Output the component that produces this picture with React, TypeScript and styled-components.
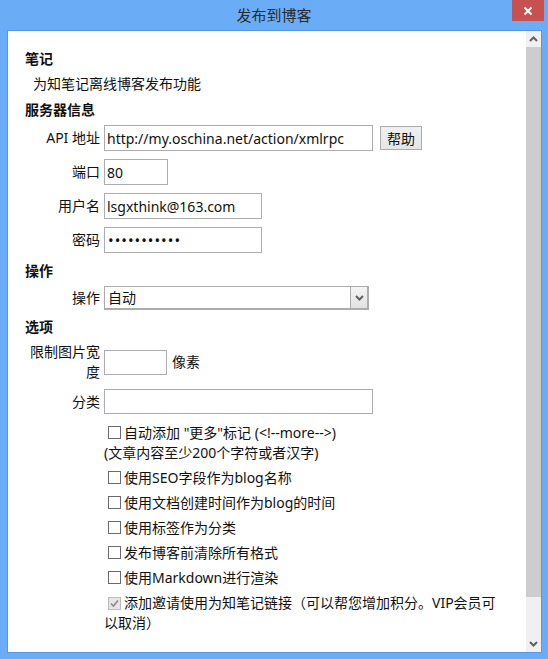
import styled, { createGlobalStyle } from "styled-components";

const GlobalStyle = createGlobalStyle`
  html, body {
    margin: 0;
    padding: 0;
    background: #6aacf5;
  }
  body {
    font-family: "Noto Sans", "Noto Sans CJK SC", sans-serif;
    font-size: 14px;
    color: #111;
  }
`;

const Chevron = ({ up }: { up?: boolean }) => (
  <svg width="9" height="6" viewBox="0 0 9 6">
    <path
      d={up ? "M1 5 L4.5 1.5 L8 5" : "M1 1 L4.5 4.5 L8 1"}
      fill="none"
      stroke="#606060"
      strokeWidth="2"
    />
  </svg>
);

const Check = () => (
  <svg width="11" height="11" viewBox="0 0 11 11">
    <path d="M2 5.5 L4.5 8 L9 2.5" fill="none" stroke="#8a8a8a" strokeWidth="1.6" />
  </svg>
);

const options = [
  ["使用SEO字段作为blog名称"],
  ["使用文档创建时间作为blog的时间"],
  ["使用标签作为分类"],
  ["发布博客前清除所有格式"],
  ["使用Markdown进行渲染"],
];

const App = () => {
  return (
    <Window>
      <GlobalStyle />
      <TitleBar>
        <Title>发布到博客</Title>
        <CloseButton>
          <svg width="10" height="10" viewBox="0 0 10 10">
            <path d="M1.5 1.5 L8.5 8.5 M8.5 1.5 L1.5 8.5" stroke="#fff" strokeWidth="2" />
          </svg>
        </CloseButton>
      </TitleBar>
      <Body>
        <Content>
          <Heading>笔记</Heading>
          <Desc>为知笔记离线博客发布功能</Desc>
          <Heading $mt={5}>服务器信息</Heading>
          <FormGrid $gap={8}>
            <Label>API 地址</Label>
            <Field>
              <TextInput $w={269} $h={26} defaultValue="http://my.oschina.net/action/xmlrpc" />
              <HelpButton>帮助</HelpButton>
            </Field>
            <Label>端口</Label>
            <Field>
              <TextInput $w={64} $h={26} defaultValue="80" />
            </Field>
            <Label>用户名</Label>
            <Field>
              <TextInput $w={158} $h={26} defaultValue="lsgxthink@163.com" />
            </Field>
            <Label>密码</Label>
            <Field>
              <PasswordInput $w={158} $h={26} type="password" defaultValue="12345678901" />
            </Field>
          </FormGrid>

          <Heading $mt={7}>操作</Heading>
          <FormGrid $gap={8}>
            <Label>操作</Label>
            <Field>
              <SelectBox>
                <SelectValue>自动</SelectValue>
                <SelectArrow>
                  <Chevron />
                </SelectArrow>
              </SelectBox>
            </Field>
          </FormGrid>

          <Heading $mt={6}>选项</Heading>
          <FormGrid $gap={7}>
            <Label>限制图片宽度</Label>
            <Field $gap={5}>
              <TextInput $w={63} $h={25} />
              <span>像素</span>
            </Field>
            <Label>分类</Label>
            <Field>
              <TextInput $w={269} $h={25} />
            </Field>
            <CheckList>
              <CheckItem>
                <Box />
                自动添加 "更多"标记 (&lt;!--more--&gt;)
                <br />
                (文章内容至少200个字符或者汉字)
              </CheckItem>
              {options.map(([text]) => (
                <CheckItem key={text}>
                  <Box />
                  {text}
                </CheckItem>
              ))}
              <CheckItem>
                <Box $checked>
                  <Check />
                </Box>
                添加邀请使用为知笔记链接（可以帮您增加积分。VIP会员可
                <br />
                以取消）
              </CheckItem>
            </CheckList>
          </FormGrid>
        </Content>
        <ScrollBar>
          <ScrollArrow>
            <Chevron up />
          </ScrollArrow>
          <ScrollThumb />
          <ScrollTrack />
          <ScrollArrow>
            <Chevron />
          </ScrollArrow>
        </ScrollBar>
      </Body>
    </Window>
  );
};

export default App;

const Window = styled.div`
  display: flex;
  flex-direction: column;
  width: 548px;
  height: 659px;
  background: #6aacf5;
  overflow: hidden;
`;
const TitleBar = styled.div`
  display: grid;
  grid-template-columns: 1fr auto 1fr;
  align-items: start;
  height: 30px;
  flex-shrink: 0;
`;
const Title = styled.div`
  grid-column: 2;
  font-family: "Noto Sans CJK SC", sans-serif;
  font-size: 15px;
  line-height: 29px;
  color: #2b2b2b;
`;
const CloseButton = styled.div`
  grid-column: 3;
  justify-self: end;
  display: flex;
  align-items: center;
  justify-content: center;
  width: 32px;
  height: 21px;
  margin-right: 4px;
  background: #c75050;
`;
const Body = styled.div`
  flex: 1;
  display: flex;
  margin: 0 6px 6px 7px;
  border: 1px solid #5597e2;
  background: #fff;
  min-height: 0;
`;
const Content = styled.div`
  flex: 1;
  padding: 17px 10px 0 17px;
  overflow: hidden;
`;
const Heading = styled.div<{ $mt?: number }>`
  margin-top: ${(p) => p.$mt ?? 0}px;
  font-family: "Noto Sans CJK SC", sans-serif;
  font-weight: 700;
  line-height: 20px;
`;
const Desc = styled.div`
  margin-top: 6px;
  padding-left: 8px;
  line-height: 20px;
`;
const FormGrid = styled.div<{ $gap: number }>`
  display: grid;
  grid-template-columns: 75px auto;
  column-gap: 4px;
  row-gap: ${(p) => p.$gap}px;
  align-items: center;
  margin-top: 6px;
`;
const Label = styled.label`
  text-align: right;
  line-height: 20px;
`;
const Field = styled.div<{ $gap?: number }>`
  display: flex;
  align-items: center;
  gap: ${(p) => p.$gap ?? 7}px;
  line-height: 20px;
`;
const TextInput = styled.input<{ $w: number; $h: number }>`
  box-sizing: border-box;
  width: ${(p) => p.$w}px;
  height: ${(p) => p.$h}px;
  padding: 0 2px;
  border: 1px solid #abadb3;
  font-family: inherit;
  font-size: 14px;
  color: #111;
  outline: none;
`;
const PasswordInput = styled(TextInput)`
  padding-left: 3px;
  letter-spacing: 1px;
  font-size: 15px;
`;
const HelpButton = styled.button`
  box-sizing: border-box;
  width: 42px;
  height: 24px;
  padding: 0;
  border: 1px solid #acacac;
  background: linear-gradient(#f0f0f0, #e5e5e5);
  font-family: "Noto Sans CJK SC", sans-serif;
  font-size: 14px;
  color: #111;
`;
const SelectBox = styled.div`
  box-sizing: border-box;
  display: flex;
  width: 265px;
  height: 24px;
  border: 2px solid #acacac;
  border-width: 1px 2px 2px 1px;
`;
const SelectValue = styled.div`
  flex: 1;
  padding-left: 3px;
  line-height: 21px;
`;
const SelectArrow = styled.div`
  display: flex;
  align-items: center;
  justify-content: center;
  width: 16px;
  border-left: 1px solid #acacac;
  background: linear-gradient(#f4f4f4, #e2e2e2);
`;
const CheckList = styled.div`
  grid-column: 2;
  display: flex;
  flex-direction: column;
  gap: 5px;
  margin-top: 2px;
`;
const CheckItem = styled.div`
  line-height: 20px;
  white-space: nowrap;
`;
const Box = styled.span<{ $checked?: boolean }>`
  box-sizing: border-box;
  display: inline-flex;
  align-items: center;
  justify-content: center;
  width: 13px;
  height: 13px;
  margin: 0 3px 0 4px;
  vertical-align: -1px;
  border: 1px solid ${(p) => (p.$checked ? "#bcbcbc" : "#6a6a6a")};
  background: ${(p) => (p.$checked ? "#e6e6e6" : "#fff")};
`;
const ScrollBar = styled.div`
  display: flex;
  flex-direction: column;
  width: 15px;
  background: #f0f0f0;
`;
const ScrollArrow = styled.div`
  display: flex;
  align-items: center;
  justify-content: center;
  height: 16px;
`;
const ScrollThumb = styled.div`
  height: 550px;
  background: #cdcdcd;
`;
const ScrollTrack = styled.div`
  flex: 1;
`;
